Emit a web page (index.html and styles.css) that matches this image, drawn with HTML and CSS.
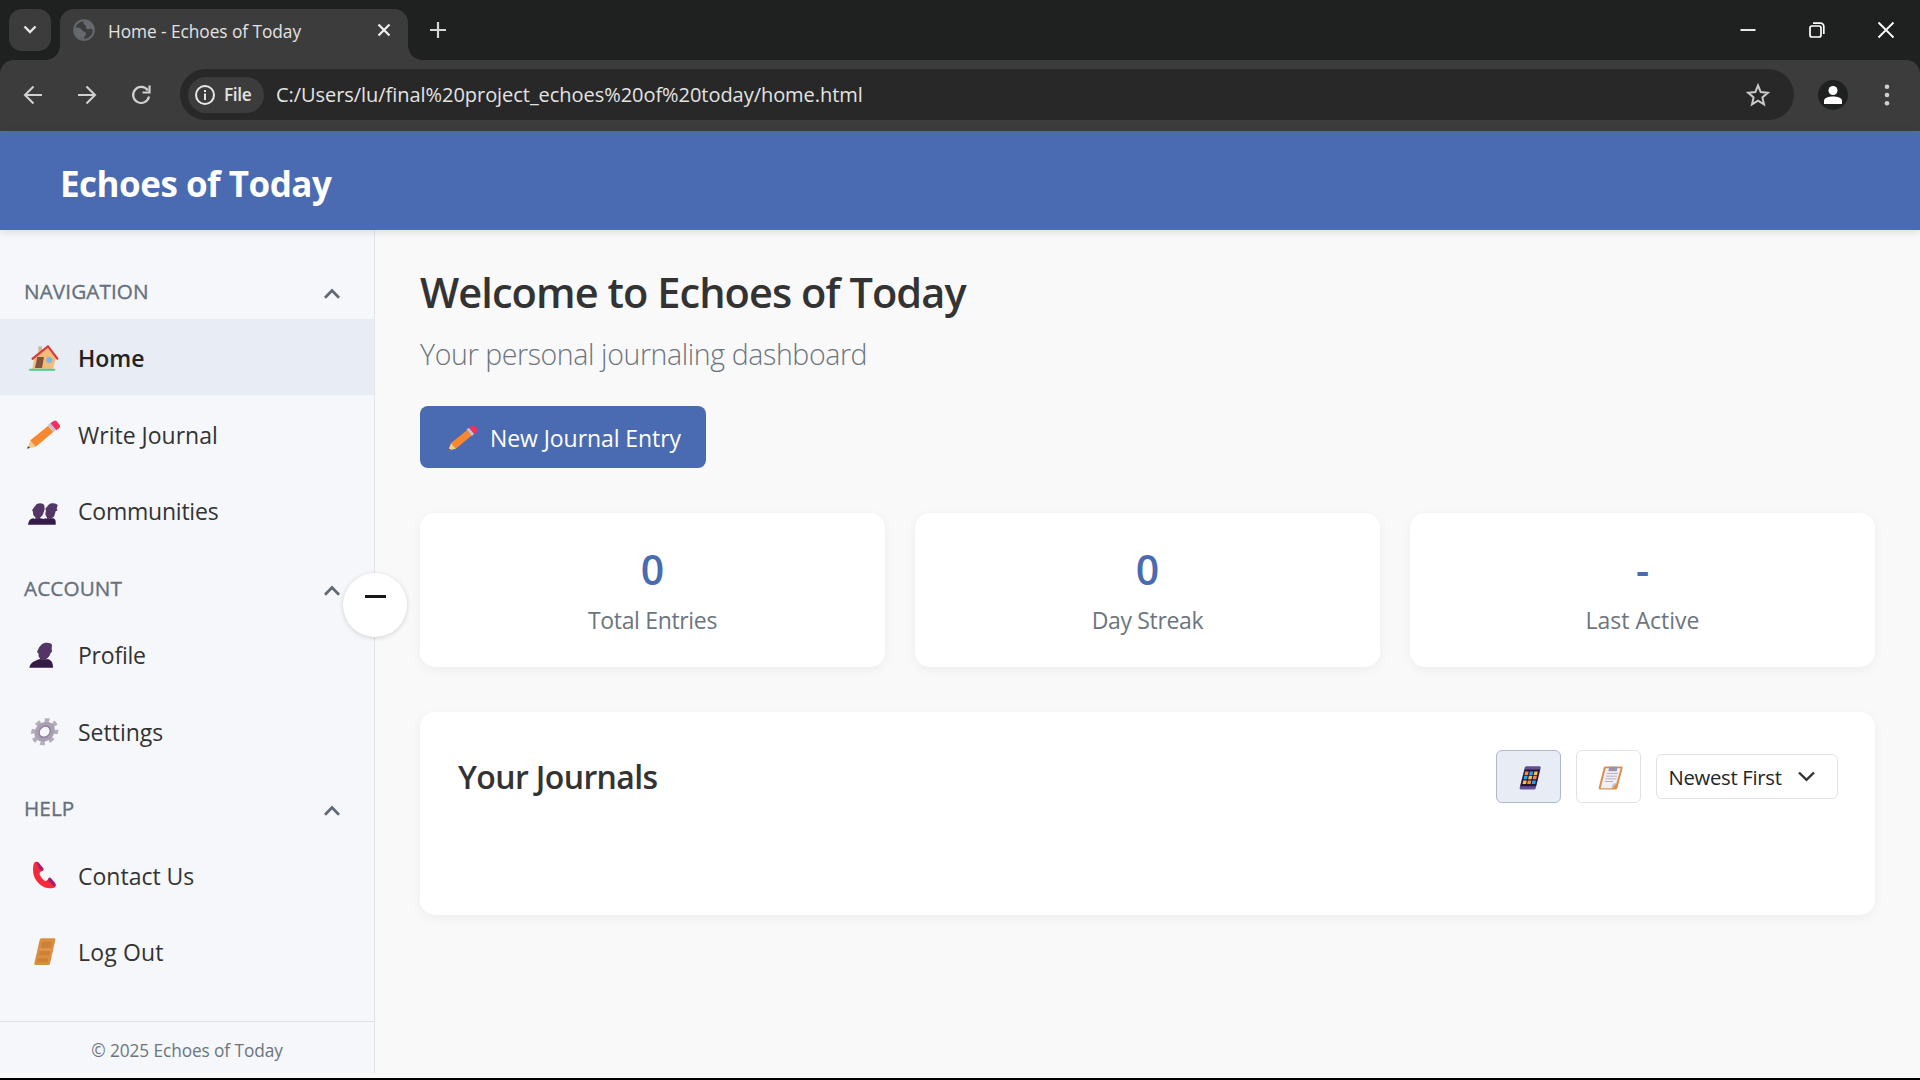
FILE: index.html
```html
<!DOCTYPE html>
<html lang="en">
<head>
<meta charset="utf-8">
<title>Home - Echoes of Today</title>
<link rel="stylesheet" href="styles.css">
</head>
<body>
<div class="browser">
  <div class="tabstrip">
    <div class="tab-search"><svg width="14" height="10" viewBox="0 0 14 10"><path d="M1.5 1.5 7 7l5.500-5.500" fill="none" stroke="#e6e6e6" stroke-width="2.400"/></svg></div>
    <div class="tab">
      <svg class="favicon" width="22" height="22" viewBox="0 0 22 22"><circle cx="11" cy="11" r="9.800" fill="none" stroke="#65686c" stroke-width="2"/><path d="M2 9c3-1 6 0 7 2s3 1 4 3-2 3-2 6C5 20 2 16 2 9zM11 1c-1 3-1 4 1 5s0 3 2 4 3-1 4 0 2 1 3 0C21 5 17 1 11 1z" fill="#65686c"/></svg>
      <span class="tab-title">Home - Echoes of Today</span>
      <svg width="14" height="14" viewBox="0 0 14 14"><path d="M1.500 1.500l11 11M12.500 1.500l-11 11" stroke="#f0f0f0" stroke-width="2.200"/></svg>
    </div>
    <svg class="new-tab" width="16" height="16" viewBox="0 0 16 16"><path d="M8 0v16M0 8h16" stroke="#d6d6d6" stroke-width="2.200"/></svg>
    <div class="window-controls">
      <svg width="16" height="16" viewBox="0 0 16 16"><path d="M0.500 8h15" stroke="#fff" stroke-width="1.800"/></svg>
      <svg width="16" height="16" viewBox="0 0 16 16"><rect x="1" y="4" width="11" height="11" rx="2" fill="none" stroke="#fff" stroke-width="1.700"/><path d="M4 1.200h7.500a3.300 3.300 0 0 1 3.300 3.300V12" fill="none" stroke="#fff" stroke-width="1.700"/></svg>
      <svg width="16" height="16" viewBox="0 0 16 16"><path d="M.5.5l15 15M15.500.5l-15 15" stroke="#fff" stroke-width="1.800"/></svg>
    </div>
  </div>
  <div class="toolbar">
    <div class="nav-buttons">
      <svg width="20" height="20" viewBox="0 0 20 20"><path d="M19 10H2.500M10.500 1.500 2 10l8.500 8.500" fill="none" stroke="#d0d0d0" stroke-width="2.100"/></svg>
      <svg width="20" height="20" viewBox="0 0 20 20"><path d="M1 10h16.500M9.500 1.500 18 10l-8.500 8.500" fill="none" stroke="#d0d0d0" stroke-width="2.100"/></svg>
      <svg width="20" height="20" viewBox="0 0 20 20"><path d="M16.800 5.500A8 8 0 1 0 18 11.500" fill="none" stroke="#d0d0d0" stroke-width="2.200"/><path d="M18.500 0.500v7h-7" fill="none" stroke="#d0d0d0" stroke-width="2.200"/></svg>
    </div>
    <div class="omnibox">
      <div class="file-chip">
        <svg width="20" height="20" viewBox="0 0 20 20"><circle cx="10" cy="10" r="9" fill="none" stroke="#e8e8e8" stroke-width="2"/><path d="M10 8.500v6.500M10 5v2" stroke="#e8e8e8" stroke-width="2"/></svg>
        <span>File</span>
      </div>
      <span class="url">C:/Users/lu/final%20project_echoes%20of%20today/home.html</span>
      <svg width="24" height="24" viewBox="0 0 24 24"><path d="M12 2.500l2.700 6.600 7.100.6-5.400 4.700 1.600 7L12 17.700 6 21.400l1.600-7L2.200 9.700l7.100-.6z" fill="none" stroke="#c9c9c9" stroke-width="2"/></svg>
    </div>
    <div class="avatar"><svg width="18" height="18" viewBox="0 0 18 18"><circle cx="9" cy="4.500" r="4.500" fill="#fff"/><path d="M0 18v-3c0-3.500 5-4.500 9-4.500s9 1 9 4.500v3z" fill="#fff"/></svg></div>
    <svg class="kebab" width="6" height="22" viewBox="0 0 6 22"><g fill="#d0d0d0"><circle cx="3" cy="2.700" r="2.300"/><circle cx="3" cy="11" r="2.300"/><circle cx="3" cy="19.300" r="2.300"/></g></svg>
  </div>
</div>

<header class="app-header">Echoes of Today</header>

<div class="layout">
  <aside class="sidebar">
    <nav class="menu">
      <div class="section"><span>NAVIGATION</span><svg width="16" height="11" viewBox="0 0 16 11"><path d="M1 9.800 8 2.500l7 7.300" fill="none" stroke="#606a75" stroke-width="2.700"/></svg></div>
      <a class="item active"><svg class="ico" viewBox="72 238 108 108">
        <path d="M115 260h11v18h-11z" fill="#cdb99a"/><path d="M103 293 142 264l26 30-9 33H97z" fill="#f2bd78"/><path d="M112 292h20l-6 33h-21z" fill="#85503c"/><circle cx="148" cy="301" r="9" fill="#7ab6f2"/><path d="M98 297l46-37 28 37" fill="none" stroke="#dc3a3d" stroke-width="7" stroke-linejoin="round" stroke-linecap="round"/><path d="M90 330h73" stroke="#4fc98a" stroke-width="6" stroke-linecap="round"/></svg><span>Home</span></a>
      <a class="item"><svg class="ico" viewBox="72 467 108 108"><g id="pencil">
        <path d="M81 565l11-26 16 20z" fill="#f3c988"/><path d="M81 565l3-7 6 4z" fill="#433b4b"/><path d="M91 540l53-43 16 18-53 44z" fill="#f9872f"/><path d="M143 495l8-6 17 20-7 7z" fill="#ccc0cf"/><path d="M151 489l10-7q5-3 9 1l9 11q3 5-1 9l-9 7z" fill="#f0305f"/></g></svg><span>Write Journal</span></a>
      <a class="item tight"><svg class="ico" viewBox="72 697 108 108">
        <path d="M106 738c6-10 24-9 27 0l1 10-3 10c-2 9-7 13-11 16l-1 8h-13v-10c-7-3-7-10-7-16l-3-5 3-3q2-5 7-10z" fill="#533566"/><path d="M146 735c8-7 24-5 27 2l-3 10 3 5-6 3-5 16-7 5-1 6h-13v-9c-7-6-5-14-3-20l-2-6z" fill="#533566"/><path d="M84 795c3-14 8-18 16-19 7 4 13 4 20 0q7 0 10 2l7-2c7 4 14 4 20 0 9 0 11 7 10 19z" fill="#351b48"/></svg><span>Communities</span></a>

      <div class="section"><span>ACCOUNT</span><svg width="16" height="11" viewBox="0 0 16 11"><path d="M1 9.800 8 2.500l7 7.300" fill="none" stroke="#606a75" stroke-width="2.700"/></svg></div>
      <a class="item tight"><svg class="ico" viewBox="72 229 108 108">
        <path d="M124 255c9-9 29-7 32 0l-1 13 1 8-4 4c-3 11-8 14-13 18l-1 8h-17l-1-10c-5-4-5-9-4-14l-5-5 3-7q3-9 10-15z" fill="#533566"/><path d="M88 324c4-16 15-20 31-26q8 8 24 0c12 4 16 12 16 26z" fill="#351b48"/></svg><span>Profile</span></a>
      <a class="item"><svg class="ico" viewBox="72 458 108 108"><g transform="translate(134 514) skewX(-10)">
        <circle r="34" fill="none" stroke="#b7adbd" stroke-width="13" stroke-dasharray="14 12.700" stroke-dashoffset="7"/><circle r="22.500" fill="none" stroke="#aca1b4" stroke-width="15"/><circle r="17" fill="none" stroke="#8f8399" stroke-width="4"/></g></svg><span>Settings</span></a>

      <div class="section"><span>HELP</span><svg width="16" height="11" viewBox="0 0 16 11"><path d="M1 9.800 8 2.500l7 7.300" fill="none" stroke="#606a75" stroke-width="2.700"/></svg></div>
      <a class="item"><svg class="ico" viewBox="72 232 108 108">
        <path d="M104 248q6-4 12 3l12 14q3 4-2 9-10 4-6 13 6 12 16 18 8-6 14-8l15 15q5 7-3 12-24 6-43-10-20-18-20-43 0-16 5-23z" fill="#f52b3c"/><path d="M109 246q5 0 8 4l14 17q1 5-6 8-10-7-10-13z" fill="#a81d70"/><path d="M143 299q4-7 9-5l14 17q3 5-1 10-12-5-22-22z" fill="#a81d70"/></svg><span>Contact Us</span></a>
      <a class="item"><svg class="ico" viewBox="72 461 108 108">
        <path d="M124 477h39q4 0 3 5l-16 71q-1 4-5 4h-39q-4 0-3-5l16-70q1-5 5-5z" fill="#d98f43"/><path d="M126 487h30l-4 18h-30zM119 516h31l-3 12h-31zM114 537h31l-3 12h-31z" fill="#cd8137"/><path d="M117 511h38" stroke="#e9a962" stroke-width="2"/></svg><span class="wide">Log Out</span></a>
    </nav>
    <footer class="side-footer">© 2025 Echoes of Today</footer>
    <button class="toggle" aria-label="Collapse"><span class="bar"></span></button>
  </aside>

  <main class="main">
    <h1>Welcome to Echoes of Today</h1>
    <p class="sub">Your personal journaling dashboard</p>
    <button class="new-entry"><svg width="30" height="26" viewBox="81 480 100 86"><use href="#pencil"/></svg><span>New Journal Entry</span></button>
    <div class="stats">
      <div class="card"><b>0</b><span class="label">Total Entries</span></div>
      <div class="card"><b>0</b><span class="label">Day Streak</span></div>
      <div class="card"><b>-</b><span class="label loose">Last Active</span></div>
    </div>
    <section class="journals">
      <h2>Your Journals</h2>
      <div class="controls">
        <button class="view on" aria-label="Grid view"><svg class="vico" viewBox="226 220.500 78 78">
          <path d="M257 227h40q4 1 3 6l-15 60q-1 4-5 4h-40q-4-1-3-6l15-59q1-5 5-5z" fill="#64518f"/><path d="M252 237h46l-12 50h-47z" fill="#25143b"/>
          <g transform="translate(268.500 262) skewX(-12)"><path d="M-19-19h10.500v10.500H-19zM8.500-6H19V4.500H8.500zM-5.200 8h10.500v10.500H-5.200z" fill="#f98a3a"/><path d="M-5.200-19h10.500v10.500H-5.200zM-19-6h10.500V4.500H-19zM8.500 8H19v10.500H8.500z" fill="#22a4e8"/><path d="M8.500-19H19v10.500H8.500zM-5.200-6h10.500V4.500H-5.200zM-19 8h10.500v10.500H-19z" fill="#fcc03c"/></g></svg></button>
        <button class="view" aria-label="List view"><svg class="vico" viewBox="466 220.500 78 78">
          <path d="M493 228h50q4 1 3 5l-16 60q-1 4-5 4h-48q-4-1-3-5l15-60q1-4 4-4z" fill="#d9924e"/><path d="M495 233h45l-13 46-14 14h-33z" fill="#f3eef6"/><path d="M513 293l4-13 11-3z" fill="#c9bccb"/><path d="M506 229h25l-3 13h-25z" fill="#9b93a6"/><path d="M498 249h34M496 257h33M494 265h33M492 273h25" stroke="#aaa1b5" stroke-width="2.500"/></svg></button>
        <div class="select"><span>Newest First</span><svg width="17" height="11" viewBox="0 0 17 11"><path d="M1 1.500l7.500 7.300L16 1.500" fill="none" stroke="#303438" stroke-width="2.400"/></svg></div>
      </div>
    </section>
  </main>
</div>
</body>
</html>
```
FILE: styles.css
```css
* { box-sizing: border-box; }
body {
  margin: 0;
  height: 1080px;
  display: flex;
  flex-direction: column;
  overflow: hidden;
  font-family: "Open Sans", "Noto Sans", sans-serif;
  font-size: 23px;
  color: #333;
  background: #f9f9f9;
  border-bottom: 2px solid #000;
}
svg { display: block; flex: none; overflow: visible; }
button { font: inherit; padding: 0; border: 0; }
h1, h2, p { margin: 0; }
span { white-space: nowrap; }

.browser { flex: none; background: #1f2120; }
.tabstrip { height: 60px; display: flex; align-items: center; padding: 0 26px 1px 9px; }
.tab-search { width: 42px; height: 42px; border-radius: 13px; background: #3c3c3c; display: flex; align-items: center; justify-content: center; }
.tab {
  position: relative;
  align-self: flex-end;
  width: 348px; height: 51px;
  margin: 0 0 -1px 9px;
  padding: 0 17px 9px 13px;
  border-radius: 14px 14px 0 0;
  background: #3c3c3c;
  display: flex; align-items: center;
}
.tab::before, .tab::after {
  content: ""; position: absolute; bottom: 0; width: 14px; height: 14px;
}
.tab::before { left: -14px; background: radial-gradient(circle at 0 0, transparent 13.500px, #3c3c3c 14px); }
.tab::after { right: -14px; background: radial-gradient(circle at 100% 0, transparent 13.500px, #3c3c3c 14px); }
.tab-title { flex: 1; margin-left: 13px; padding-top: 3px; font-size: 17.300px; letter-spacing: -.05px; color: #e3e3e3; }
.new-tab { margin-left: 22px; }
.window-controls { margin-left: auto; display: flex; gap: 53px; }
.toolbar { height: 71px; background: #3c3c3c; border-radius: 14px 14px 0 0; display: flex; align-items: center; padding: 0 30px 2px 23px; }
.nav-buttons { display: flex; gap: 34px; width: 157px; }
.omnibox { width: 1614px; height: 51px; border-radius: 26px; background: #282828; display: flex; align-items: center; padding: 0 24px 0 8px; color: #e3e3e3; }
.file-chip { width: 76px; height: 36px; border-radius: 18px; background: #3c3c3c; display: flex; align-items: center; gap: 9px; padding-left: 7px; font-size: 17.300px; letter-spacing: -.35px; font-weight: 600; }
.url { flex: 1; margin-left: 12px; font-size: 20px; letter-spacing: -.05px; }
.avatar { width: 30px; height: 30px; margin-left: 24px; border-radius: 50%; background: #1f2120; display: flex; align-items: center; justify-content: center; }
.kebab { margin-left: auto; }

.app-header {
  flex: none;
  position: relative; z-index: 2;
  height: 99px;
  padding: 5px 0 0 60px;
  line-height: 95px;
  font-size: 35px; font-weight: 700; letter-spacing: -.5px; color: #fff;
  background: #4a6bb1;
  box-shadow: 0 2px 8px rgba(0,0,0,.12);
}
.layout { flex: 1; display: flex; min-height: 0; }
.sidebar { position: relative; width: 375px; margin-bottom: 5px; flex: none; display: flex; flex-direction: column; background: #f5f7fb; border-right: 1px solid #e0e4e9; }
.menu { flex: 1; padding-top: 21px; }
.section { height: 67.500px; padding: 20px 34px 8px 24px; display: flex; align-items: center; justify-content: space-between; color: #66707c; font-size: 20.700px; letter-spacing: .1px; }
.section span { -webkit-text-stroke: .35px #66707c; }
.section svg { margin-top: 5px; }
.item { height: 76.500px; padding: 1px 0 0 24px; display: flex; align-items: center; gap: 18px; color: #333; }
.item span { padding-top: 2px; }
.item.active { background: #e8edf5; color: #222; font-weight: 600; }
.tight { letter-spacing: -.22px; }
.wide { letter-spacing: .15px; }
.ico { width: 36px; height: 36px; }
.side-footer { height: 52px; border-top: 1px solid #dfe3e8; text-align: center; line-height: 58px; font-size: 17.300px; letter-spacing: -.1px; color: #6c757d; }
.toggle { position: absolute; right: -33px; top: 343px; width: 64px; height: 64px; padding-bottom: 17px; display: flex; align-items: center; justify-content: center; border-radius: 50%; background: #fff; box-shadow: 0 1px 5px rgba(0,0,0,.16); z-index: 3; }
.bar { width: 21px; height: 3px; background: #16181a; }

.main { flex: 1; padding: 32px 45px 0; }
h1 { height: 60px; line-height: 60px; font-size: 41.500px; font-weight: 600; letter-spacing: -.93px; }
.sub { height: 60px; margin-top: 2px; line-height: 60px; font-size: 28.500px; font-weight: 300; letter-spacing: -.39px; color: #6c757d; }
.new-entry { display: flex; align-items: center; gap: 12px; width: 286px; height: 62px; margin-top: 22px; padding: 2px 0 0 28px; border-radius: 8px; background: #4a6bb1; color: #fff; letter-spacing: -.07px; }
.stats { display: grid; grid-template-columns: repeat(3, 1fr); gap: 30px; margin-top: 45px; }
.card, .journals { background: #fff; border-radius: 15px; box-shadow: 0 3px 12px rgba(0,0,0,.05); }
.card { height: 154px; padding-top: 30px; display: flex; flex-direction: column; align-items: center; }
.card b { height: 52px; line-height: 52px; font-size: 41px; font-weight: 600; color: #4a6bb1; }
.label { height: 36px; margin-top: 7px; line-height: 36px; letter-spacing: -.33px; color: #6c757d; }
.label.loose { letter-spacing: 0; }
.journals { height: 203px; margin-top: 45px; padding: 38px 37px 0 38px; display: flex; justify-content: space-between; align-items: flex-start; }
h2 { line-height: 53px; font-size: 32px; font-weight: 600; letter-spacing: -.62px; }
.controls { display: flex; align-items: center; gap: 15px; }
.view { width: 65px; height: 53px; border: 1px solid #dfe3e8; border-radius: 6px; background: #fff; display: flex; align-items: center; justify-content: center; }
.view.on { background: #e8edf5; border-color: #b0b9c8; }
.vico { width: 26px; height: 26px; }
.select { width: 182px; height: 45px; border: 1px solid #dfe3e8; border-radius: 6px; display: flex; align-items: center; justify-content: space-between; padding: 0 22px 0 11.500px; font-size: 20.300px; letter-spacing: -.3px; color: #212529; }
```
